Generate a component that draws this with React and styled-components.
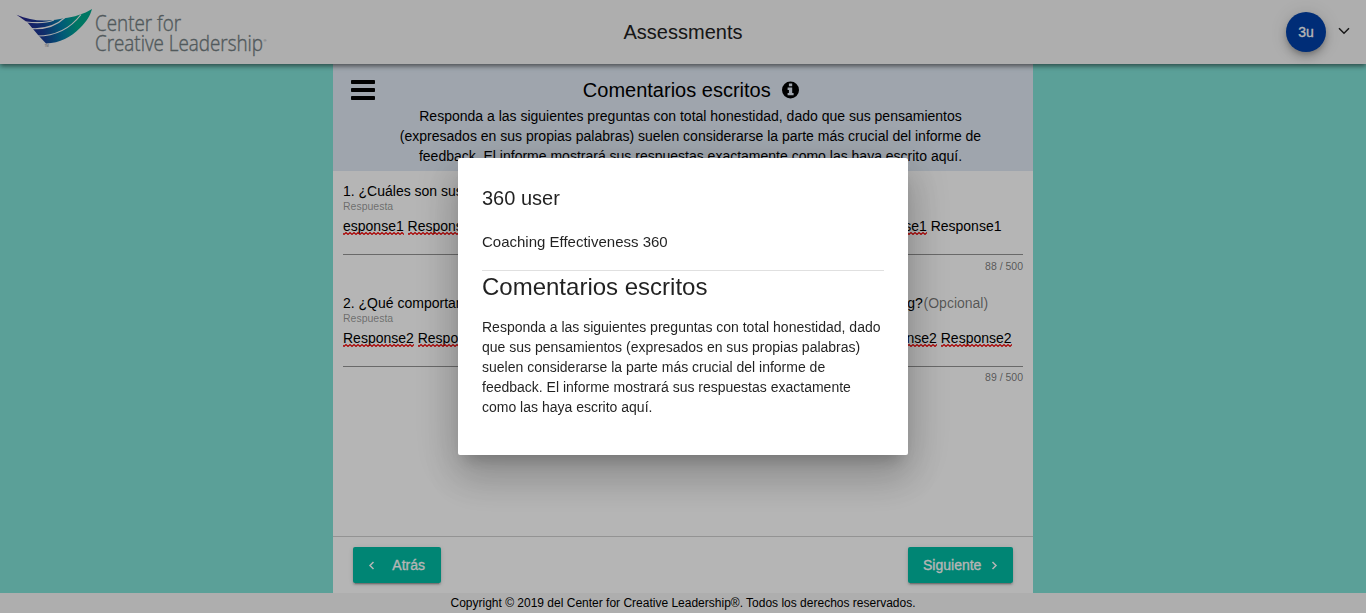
import React from 'react';
import styled, { createGlobalStyle } from 'styled-components';

const Global = createGlobalStyle`
  * { box-sizing: border-box; }
  body { margin: 0; font-family: "Liberation Sans", Arial, sans-serif; font-size: 14px; color: #000; }
`;

const Page = styled.div`
  height: 100vh;
  display: flex;
  flex-direction: column;
  background: #80e2d7;
  overflow: hidden;
`;

const Header = styled.header`
  height: 64px;
  flex: none;
  position: relative;
  z-index: 1;
  display: grid;
  grid-template-columns: 1fr auto 1fr;
  align-items: center;
  background: #f5f5f5;
  box-shadow: 0 2px 5px rgba(0, 0, 0, 0.55);
`;

const Logo = styled.svg`
  display: block;
  width: 340px;
  height: 64px;
`;

const AppTitle = styled.h1`
  margin: 0;
  font-size: 20px;
  font-weight: 400;
  color: #212121;
`;

const Account = styled.div`
  display: flex;
  align-items: center;
  justify-content: flex-end;
  gap: 12px;
  padding-right: 16px;
`;

const Avatar = styled.div`
  width: 40px;
  height: 40px;
  border-radius: 50%;
  background: #0040a8;
  color: #fff;
  display: flex;
  align-items: center;
  justify-content: center;
  -webkit-text-stroke: 0.3px #fff;
  box-shadow: 0 3px 5px -1px rgba(0, 0, 0, 0.2), 0 6px 10px rgba(0, 0, 0, 0.14), 0 1px 18px rgba(0, 0, 0, 0.12);
`;

const Icon = styled.svg`
  display: block;
  flex: none;
`;

const Chevron = styled(Icon)`
  margin-bottom: 3px;
`;

const Panel = styled.main`
  width: 700px;
  flex: 1;
  align-self: center;
  display: flex;
  flex-direction: column;
  background: #fff;
`;

const Intro = styled.section`
  height: 107px;
  display: grid;
  grid-template-columns: 24px 1fr;
  align-items: start;
  padding: 16px 43px 0 18px;
  background: #e0e9f4;
`;

const IntroBody = styled.div`
  padding: 0 0 0 16px;
  text-align: center;
`;

const IntroTitle = styled.h2`
  margin: 0 -1px 0 0;
  height: 26px;
  display: flex;
  align-items: flex-start;
  justify-content: center;
  gap: 11.5px;
  font-size: 20px;
  line-height: 21px;
  font-weight: 400;
`;

const IntroLine = styled.div`
  line-height: 20px;
  white-space: nowrap;
`;

const Questions = styled.section`
  flex: 1;
  padding: 0 10px;
`;

const Field = styled.div`
  height: 112px;
  padding-top: 12px;
`;

const Prompt = styled.div`
  line-height: 17px;
  white-space: nowrap;
`;

const Muted = styled.span`
  padding-left: 0.8px;
  color: rgba(0, 0, 0, 0.54);
`;

const Label = styled.div`
  font-size: 10.5px;
  line-height: 13px;
  color: rgba(0, 0, 0, 0.42);
`;

const Answer = styled.div`
  height: 42px;
  padding-top: 4px;
  line-height: 18px;
  white-space: pre;
  border-bottom: 1px solid #949494;
`;

const Misspelled = styled.span`
  position: relative;
`;

const Squiggle = styled.svg`
  position: absolute;
  left: 0;
  bottom: -1px;
  width: 100%;
  height: 3px;
`;

const Counter = styled.div`
  padding-top: ${(p) => p.$gap}px;
  text-align: right;
  font-size: 10.5px;
  line-height: 13px;
  color: rgba(0, 0, 0, 0.54);
`;

const Actions = styled.nav`
  height: 57px;
  display: flex;
  justify-content: space-between;
  padding: 10px 20px;
  border-top: 1px solid #d0d0d0;
`;

const Button = styled.button`
  width: ${(p) => p.$width}px;
  height: 36px;
  border: 0;
  border-radius: 2px;
  display: flex;
  align-items: center;
  justify-content: space-between;
  padding: 0 ${(p) => p.$end}px 0 15px;
  background: #00bca4;
  color: #fff;
  font: 14px "Liberation Sans", Arial, sans-serif;
  -webkit-text-stroke: 0.3px #fff;
  box-shadow: 0 3px 1px -2px rgba(0, 0, 0, 0.2), 0 2px 2px rgba(0, 0, 0, 0.14), 0 1px 5px rgba(0, 0, 0, 0.12);
`;

const Footer = styled.footer`
  height: 20px;
  flex: none;
  background: #f5f5f5;
  text-align: center;
  font-size: 12px;
  line-height: 20px;
`;

const Backdrop = styled.div`
  position: fixed;
  inset: 0;
  z-index: 2;
  display: flex;
  align-items: center;
  justify-content: center;
  background: rgba(0, 0, 0, 0.29);
`;

const Dialog = styled.div`
  width: 450px;
  height: 297px;
  padding: 24px;
  border-radius: 2px;
  background: #fff;
  color: rgba(0, 0, 0, 0.87);
  box-shadow: 0 11px 15px -7px rgba(0, 0, 0, 0.2), 0 24px 38px 3px rgba(0, 0, 0, 0.14), 0 9px 46px 8px rgba(0, 0, 0, 0.12);
`;

const DialogUser = styled.div`
  font-size: 20px;
  line-height: 32px;
`;

const DialogSurvey = styled.div`
  padding: 18px 0;
  font-size: 15px;
  line-height: 20px;
  border-bottom: 1px solid #e0e0e0;
`;

const DialogTitle = styled.h2`
  margin: 0 0 14px;
  font-size: 24px;
  line-height: 32px;
  font-weight: 400;
`;

const DialogText = styled.p`
  margin: 0 -2px 0 0;
  line-height: 20px;
`;

const ZIGZAG = 'M-1 0.500' + 'l2 2l2 -2'.repeat(24);

const Typo = ({ children }) => (
  <Misspelled>
    {children}
    <Squiggle>
      <path d={ZIGZAG} fill="none" stroke="#f00000" strokeWidth="1.100" />
    </Squiggle>
  </Misspelled>
);

const words = (word, n) =>
  Array.from({ length: n }, (_, i) => (
    <React.Fragment key={i}><Typo>{word}</Typo>{' '}</React.Fragment>
  ));

export default function App() {
  return (
    <Page>
      <Global />
      <Header>
        <Logo viewBox="0 0 340 64">
          <defs>
            <linearGradient id="wing" x1="16" y1="30" x2="92" y2="18" gradientUnits="userSpaceOnUse">
              <stop offset="0.1" stopColor="#26248c" />
              <stop offset="0.35" stopColor="#173f96" />
              <stop offset="0.6" stopColor="#0081a8" />
              <stop offset="0.8" stopColor="#00a88c" />
            </linearGradient>
          </defs>
          <path fill="url(#wing)" d="M16.500 14.800C26 19 36 20.800 46 20.500C53 20.300 59 19.200 64 18.200C74 17.200 84 14 92 9C90 16 87 21 80 28C71 37 60 43 46 43.500L38.500 35.500L33 29L27.500 22.500Z" />
          <g fill="none" stroke="#f5f5f5" strokeWidth="1.200">
            <path d="M26 22C38 23.400 48 22.500 54 20" />
            <path d="M31 28.600C44 29.500 56 26 65 17.500" />
            <path d="M37 36C54 36 70 29 81 14.500" />
          </g>
          <text x="44.500" y="46.500" fontSize="3" fill="#7b8589">TM</text>
          <g fontFamily="'Open Sans', sans-serif" fontWeight="300" fontSize="22" fill="#737e82" stroke="#737e82" strokeWidth="0.400">
            <text x="95" y="31" textLength="86" lengthAdjust="spacingAndGlyphs">Center for</text>
            <text x="95" y="50.500" textLength="168" lengthAdjust="spacingAndGlyphs">Creative Leadership</text>
          </g>
          <text x="263.500" y="42" fontSize="4" fill="#7b8589">®</text>
        </Logo>
        <AppTitle>Assessments</AppTitle>
        <Account>
          <Avatar>3u</Avatar>
          <Chevron width="12" height="8" viewBox="0 0 12 8">
            <path d="M1 1.200l5 5 5-5" fill="none" stroke="#212121" strokeWidth="1.500" />
          </Chevron>
        </Account>
      </Header>
      <Panel>
        <Intro>
          <Icon width="24" height="20" viewBox="0 0 24 20">
            <rect width="24" height="4" rx="0.800" />
            <rect y="8" width="24" height="4" rx="0.800" />
            <rect y="16" width="24" height="4" rx="0.800" />
          </Icon>
          <IntroBody>
            <IntroTitle>
              Comentarios escritos
              <Icon width="17" height="20" viewBox="0 0 17 20">
                <circle cx="8.500" cy="10" r="8.500" />
                <path fill="#e0e9f4" d="M6.900 3.600h3.300v2.600H6.900zM5.600 7.600h4.600v5.300h1.400v2.300H5.600v-2.300h1.300v-3H5.600z" />
              </Icon>
            </IntroTitle>
            <IntroLine>Responda a las siguientes preguntas con total honestidad, dado que sus pensamientos</IntroLine>
            <IntroLine>(expresados en sus propias palabras) suelen considerarse la parte más crucial del informe de</IntroLine>
            <IntroLine>feedback. El informe mostrará sus respuestas exactamente como las haya escrito aquí.</IntroLine>
          </IntroBody>
        </Intro>
        <Questions>
          <Field>
            <Prompt>1. ¿Cuáles son sus fortalezas más importantes como coach?</Prompt>
            <Label>Respuesta</Label>
            <Answer><Typo>esponse1</Typo> {words('Response1', 7)}Response1</Answer>
            <Counter $gap={5}>88 / 500</Counter>
          </Field>
          <Field>
            <Prompt>2. ¿Qué comportamientos debería cambiar para aumentar mucho su eficacia en el coaching?<Muted>(Opcional)</Muted></Prompt>
            <Label>Respuesta</Label>
            <Answer>{words('Response2', 9)}</Answer>
            <Counter $gap={4}>89 / 500</Counter>
          </Field>
        </Questions>
        <Actions>
          <Button $width={88} $end={16}>
            <Icon width="7" height="9" viewBox="0 0 7 9"><path d="M5.500 1L2 4.500 5.500 8" fill="none" stroke="#fff" strokeWidth="1.500" /></Icon>
            Atrás
          </Button>
          <Button $width={105} $end={15.5}>
            Siguiente
            <Icon width="7" height="9" viewBox="0 0 7 9"><path d="M1.500 1L5 4.500 1.500 8" fill="none" stroke="#fff" strokeWidth="1.500" /></Icon>
          </Button>
        </Actions>
      </Panel>
      <Footer>Copyright © 2019 del Center for Creative Leadership®. Todos los derechos reservados.</Footer>
      <Backdrop>
        <Dialog role="dialog">
          <DialogUser>360 user</DialogUser>
          <DialogSurvey>Coaching Effectiveness 360</DialogSurvey>
          <DialogTitle>Comentarios escritos</DialogTitle>
          <DialogText>
            Responda a las siguientes preguntas con total honestidad, dado que sus pensamientos (expresados en sus
            propias palabras) suelen considerarse la parte más crucial del informe de feedback. El informe mostrará
            sus respuestas exactamente como las haya escrito aquí.
          </DialogText>
        </Dialog>
      </Backdrop>
    </Page>
  );
}
